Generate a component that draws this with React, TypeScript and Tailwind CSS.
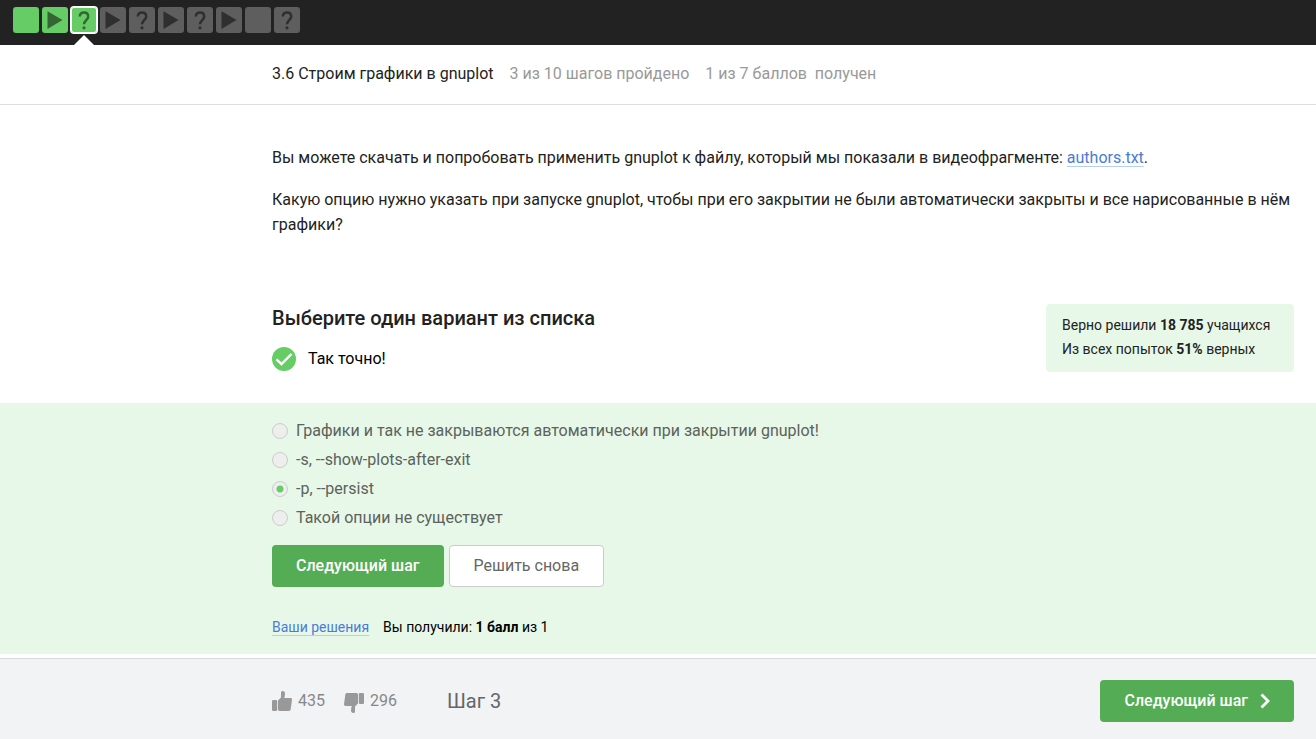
import type { ReactNode } from 'react';

type StepKind = 'text' | 'video' | 'quiz';

const steps: { kind: StepKind; passed?: boolean; current?: boolean }[] = [
  { kind: 'text', passed: true },
  { kind: 'video', passed: true },
  { kind: 'quiz', passed: true, current: true },
  { kind: 'video' },
  { kind: 'quiz' },
  { kind: 'video' },
  { kind: 'quiz' },
  { kind: 'video' },
  { kind: 'text' },
  { kind: 'quiz' },
];

const options = [
  'Графики и так не закрываются автоматически при закрытии gnuplot!',
  '-s, --show-plots-after-exit',
  '-p, --persist',
  'Такой опции не существует',
];

function StepIcon({ kind }: { kind: StepKind }) {
  if (kind === 'video') {
    return (
      <svg viewBox="0 0 26 26" className="size-[26px]" fill="currentColor" aria-hidden="true">
        <path d="M5.500 4.200v17.800L20.500 13.100z" />
      </svg>
    );
  }
  if (kind === 'quiz') {
    return (
      <svg viewBox="0 0 26 26" className="size-[26px]" fill="none" stroke="currentColor" strokeWidth="2.500" aria-hidden="true">
        <path d="M8.800 9.400C8.800 6.900 10.500 5.400 13 5.400s4.200 1.500 4.200 4c0 3.500-4.200 3.900-4.200 7.900" />
        <circle cx="13" cy="20.800" r="1.600" fill="currentColor" stroke="none" />
      </svg>
    );
  }
  return null;
}

function StepNav() {
  return (
    <nav aria-label="Шаги урока" className="h-[45px] bg-[#222] pt-[7px] pl-[13px]">
      <ol className="flex gap-[3px]">
        {steps.map((s, i) => (
          <li key={i} className="relative">
            <a
              href={`#step-${i + 1}`}
              aria-label={`Шаг ${i + 1}`}
              className={`block size-[26px] rounded-[3px] ${
                s.passed ? 'bg-[#66cc66] text-[#336633]' : 'bg-[#5e5e5e] text-[#2f2f2f]'
              } ${s.current ? 'ring-1 ring-white inset-ring-1 inset-ring-white' : ''}`}
            >
              <StepIcon kind={s.kind} />
            </a>
            {s.current && (
              <svg viewBox="0 0 20 10" className="absolute top-7 left-[3px] h-[10px] w-5" fill="#fff" aria-hidden="true">
                <path d="M10 0 20 10H0z" />
              </svg>
            )}
          </li>
        ))}
      </ol>
    </nav>
  );
}

function TextLink({ href, children }: { href: string; children: ReactNode }) {
  return (
    <a
      href={href}
      className="text-[#4a7bd9] underline decoration-[#b5cef5] decoration-1 underline-offset-[3px] [text-decoration-skip-ink:none]"
    >
      {children}
    </a>
  );
}

function ThumbUp({ className = '' }: { className?: string }) {
  return (
    <svg viewBox="0 0 20 20" className={`size-5 ${className}`} fill="#999" aria-hidden="true">
      <rect x="0" y="9" width="5.200" height="11" rx="1.200" />
      <path d="M6 9.600 9 6.600V1.600C9 .6 9.800 0 10.700 0c1.400 0 2.300 1 2.300 2.400 0 1.700-.3 3.300-.8 4.700h6.300c1 0 1.600.7 1.500 1.700l-1.300 9.400c-.1 1-.9 1.700-1.900 1.700H7.600C6.700 19.900 6 19.200 6 18.300z" />
    </svg>
  );
}

export default function App() {
  return (
    <div className="min-h-screen bg-white font-[Roboto,sans-serif] text-base text-[#222]">
      <StepNav />

      <header className="flex h-[60px] items-center gap-4 border-b border-[#ddd] pb-px pl-[272px]">
        <h1>3.6 Строим графики в gnuplot</h1>
        <span className="text-[#999]">3 из 10 шагов пройдено</span>
        <span className="text-[#999]">1 из 7 баллов&nbsp; получен</span>
      </header>

      <main>
        <div className="pt-10 pr-[22px] pl-[272px]">
          <div className="flex flex-col gap-[17px] leading-[25px]">
            <p>
              Вы можете скачать и попробовать применить gnuplot к файлу, который мы показали в видеофрагменте:{' '}
              <TextLink href="#authors.txt">authors.txt</TextLink>.
            </p>
            <p>
              Какую опцию нужно указать при запуске gnuplot, чтобы при его закрытии не были автоматически закрыты и все
              нарисованные в нём графики?
            </p>
          </div>

          <div className="mt-[67px] flex items-start justify-between">
            <div>
              <h2 id="question" className="text-xl leading-7 font-medium">
                Выберите один вариант из списка
              </h2>
              <p className="mt-[15px] mb-8 flex items-center gap-3 leading-6 text-black">
                <svg viewBox="0 0 24 24" className="size-6" aria-hidden="true">
                  <circle cx="12" cy="12" r="12" fill="#66cc66" />
                  <path d="m4.500 12.300 5 4.800L19.500 7" fill="none" stroke="#fff" strokeWidth="2.400" />
                </svg>
                Так точно!
              </p>
            </div>
            <div className="min-w-[248px] rounded bg-[#e7f8e9] px-4 pt-[9px] pb-[11px] text-sm leading-6">
              <p>
                Верно решили <b>18 785</b> учащихся
              </p>
              <p>
                Из всех попыток <b>51%</b> верных
              </p>
            </div>
          </div>
        </div>

        <form className="bg-[#e7f8e9] pt-4 pr-[22px] pb-[17px] pl-[272px]" onSubmit={(e) => e.preventDefault()}>
          <div role="radiogroup" aria-labelledby="question" className="flex flex-col items-start gap-[5px]">
            {options.map((text, i) => (
              <label key={text} className="flex items-center gap-2 leading-6 text-[#5c625c]">
                <input
                  type="radio"
                  name="answer"
                  defaultChecked={i === 2}
                  className="size-4 appearance-none rounded-full border border-[#ccc] bg-[#eee] checked:bg-[radial-gradient(circle,#66cc66_3px,#eee_4px)]"
                />
                {text}
              </label>
            ))}
          </div>
          <div className="mt-[15px] flex gap-[5px]">
            <button type="button" className="h-[42px] rounded bg-[#54ad54] px-6 font-medium text-white">
              Следующий шаг
            </button>
            <button type="submit" className="h-[42px] rounded border border-[#ccc] bg-white px-6 text-[#666]">
              Решить снова
            </button>
          </div>
          <p className="mt-[30px] flex gap-[14px] text-sm text-black">
            <TextLink href="#solutions">Ваши решения</TextLink>
            <span>
              Вы получили: <b>1 балл</b> из 1
            </span>
          </p>
        </form>
      </main>

      <footer className="mt-1 flex h-[81px] items-center border-t border-[#d8dadd] bg-[#f2f3f5] pt-[3px] pr-[22px] pl-[272px] text-[#888]">
        <button type="button" aria-label="Нравится: 435" className="flex items-center gap-[6px]">
          <ThumbUp />
          435
        </button>
        <button type="button" aria-label="Не нравится: 296" className="ml-[19px] flex items-center gap-[6px]">
          <ThumbUp className="mt-1 rotate-180" />
          296
        </button>
        <span className="ml-[50px] text-xl text-[#666]">Шаг 3</span>
        <button
          type="button"
          className="ml-auto flex h-[42px] items-center gap-3 rounded bg-[#54ad54] pr-6 pl-[25px] font-medium text-white"
        >
          Следующий шаг
          <svg viewBox="0 0 10 16" className="h-4 w-[10px]" fill="none" stroke="#fff" strokeWidth="2.800" aria-hidden="true">
            <path d="m1.500 1.500 6.500 6.500-6.500 6.500" />
          </svg>
        </button>
      </footer>
    </div>
  );
}
